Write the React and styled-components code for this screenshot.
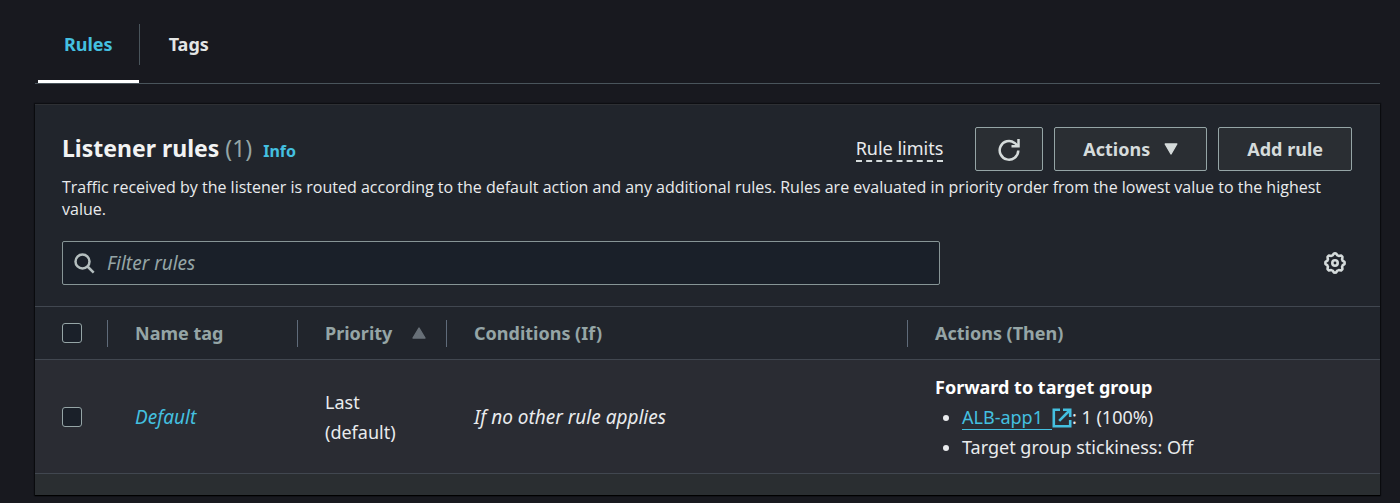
import { useState } from 'react'
import styled, { createGlobalStyle } from 'styled-components'

const GlobalStyle = createGlobalStyle`
  * {
    box-sizing: border-box;
  }

  body {
    margin: 0;
    background-color: #18191f;
    color: #e9ebed;
    font-family: "Noto Sans", "Open Sans", sans-serif;
    font-size: 18px;
    line-height: 30px;
  }

  button, input {
    font-family: inherit;
    font-size: inherit;
    color: inherit;
  }
`;

const Page = styled.main`
  padding: 7px 20px 8px 35px;
`;

const TabList = styled.div`
  display: flex;
  align-items: stretch;
  height: 77px;
  padding-left: 3px;

  border-bottom: 1px solid #49545b;
`;

const Tab = styled.button`
  padding: 0 26px;

  border: none;
  border-bottom: 3px solid ${props => props.$active ? "#fff" : "transparent"};
  background: none;
  color: ${props => props.$active ? "#44c0e0" : "#e3e5e5"};

  font-weight: 700;
  cursor: pointer;
`;

const TabDivider = styled.span`
  width: 1px;
  height: 41px;
  margin: 17px 3px 0 0;

  background-color: #49545b;
`;

const Panel = styled.section`
  margin-top: 20px;

  border-top: 1px solid #2e3034;
  background-color: #21252c;
  box-shadow: 0 1px 1px #000, 0 0 1px 1px #0d0e12;
`;

const PanelHeader = styled.header`
  padding: 22px 28px 21px 27px;
`;

const TitleRow = styled.div`
  display: flex;
  align-items: center;
  justify-content: space-between;
`;

const TitleBlock = styled.div`
  display: flex;
  align-items: baseline;
  gap: 11px;
`;

const Title = styled.h2`
  margin: 0;

  color: #f2f3f3;
  font-size: 23px;
  font-weight: 700;
`;

const Counter = styled.span`
  color: #95a5a6;
  font-weight: 400;
`;

const InfoLink = styled.a`
  color: #44c0e0;
  font-size: 16px;
  font-weight: 700;
  text-decoration: none;
`;

const ActionBar = styled.div`
  display: flex;
  align-items: center;
  gap: 11px;
`;

const LimitsButton = styled.button`
  margin-right: 21px;
  padding: 0;

  border: none;
  border-bottom: 2px dashed #d5dbdb;
  background: none;

  line-height: 24px;
  cursor: pointer;
`;

const Button = styled.button`
  display: flex;
  align-items: center;
  justify-content: center;
  gap: 14px;
  height: 44px;
  padding: 0 ${props => props.$iconOnly ? "22px" : "28px"};

  border: 1px solid #95a5a6;
  border-radius: 2px;
  background-color: #2a2e33;
  color: #d5dbdb;

  font-weight: 700;
  cursor: pointer;

  &:hover {
    background-color: #21252c;
  }
`;

const Description = styled.p`
  margin: 5px 0 21px;

  font-family: "Open Sans", "Noto Sans", sans-serif;
  font-size: 16px;
  line-height: 22px;
`;

const FilterRow = styled.div`
  display: flex;
  align-items: center;
  justify-content: space-between;
  padding-right: 6px;
`;

const SearchBox = styled.label`
  display: flex;
  align-items: center;
  gap: 12px;
  width: 100%;
  max-width: 878px;
  height: 44px;
  padding: 0 11px;

  border: 1px solid #879596;
  border-radius: 2px;
  background-color: #1a2029;
  color: #b4bebe;
`;

const SearchInput = styled.input`
  flex: 1;
  padding: 0;

  border: none;
  outline: none;
  background: none;

  font-size: 19px;

  &::placeholder {
    color: #95a5a6;
    font-style: italic;
    opacity: 1;
  }
`;

const IconButton = styled.button`
  display: flex;
  padding: 0;

  border: none;
  background: none;
  cursor: pointer;
`;

const Table = styled.table`
  width: 100%;

  border-collapse: collapse;
  table-layout: fixed;
`;

const Column = styled.col`
  width: ${props => props.$width || "auto"};
`;

const HeaderCell = styled.th`
  height: 53px;
  padding: 0;

  border-top: 1px solid #414750;
  border-bottom: 1px solid #414750;
  color: #95a5a6;

  font-weight: 700;
  text-align: left;
`;

const HeaderContent = styled.div`
  display: flex;
  align-items: center;
  gap: 20px;
  height: 27px;
  padding-left: 27px;

  border-right: ${props => props.$last ? "none" : "1px solid #5f6b7a"};
`;

const Cell = styled.td`
  padding: 12px 27px 11px;

  border-bottom: 1px solid #414750;
  background-color: #2a2c33;

  font-size: ${props => props.$italic ? "19px" : "18px"};
  font-style: ${props => props.$italic ? "italic" : "normal"};
`;

const Checkbox = styled.input`
  appearance: none;
  display: block;
  width: 20px;
  height: 20px;
  margin: 0;

  border: 1px solid #95a5a6;
  border-radius: 3px;
  background-color: #1a2029;

  &:checked {
    background-color: #44c0e0;
  }
`;

const RuleLink = styled.a`
  color: #44c0e0;
  text-decoration: none;
`;

const TargetLink = styled.a`
  display: inline-flex;
  align-items: center;

  color: #44c0e0;
  text-decoration: none;
`;

const TargetName = styled.span`
  padding-right: 9px;

  border-bottom: 1px solid #44c0e0;
  line-height: 24px;
`;

const ActionTitle = styled.strong`
  color: #fff;
  font-weight: 700;
`;

const ActionList = styled.ul`
  margin: 0;
  padding-left: 27px;
`;

const ActionItem = styled.li`
  height: 30px;
`;

const PanelFooter = styled.footer`
  height: 21px;

  background-color: #2a2e31;
`;

const RefreshIcon = () => (
  <svg width="22" height="23" viewBox="0 0 22 23" fill="none" stroke="currentColor" strokeWidth="2.5" aria-hidden="true">
    <path d="M20.3 12.5A9.3 9.3 0 1 1 16.6 4.9L19.8 7.6" />
    <path d="M20.5 1V8.2H13.5" />
  </svg>
)

const CaretDown = () => (
  <svg width="14" height="12" viewBox="0 0 14 12" fill="currentColor" stroke="currentColor" strokeWidth="1.4" strokeLinejoin="round" aria-hidden="true">
    <path d="M1.2 1H12.8L7 11Z" />
  </svg>
)

const CaretUp = () => (
  <svg width="14" height="12" viewBox="0 0 14 12" fill="#687078" stroke="#687078" strokeWidth="1.4" strokeLinejoin="round" aria-hidden="true">
    <path d="M1 11H13L7 1Z" />
  </svg>
)

const SearchIcon = () => (
  <svg width="21" height="21" viewBox="0 0 21 21" fill="none" stroke="currentColor" strokeWidth="2.5" aria-hidden="true">
    <circle cx="8.5" cy="8.5" r="7" />
    <path d="M13.5 13.5L19.7 19.7" />
  </svg>
)

// eight lobed cog, built from arcs around the centre
const GearIcon = () => {
  const points = Array.from({ length: 64 }, (_, i) => {
    const angle = i * Math.PI / 32
    const wave = Math.max(-0.8, Math.min(0.8, Math.cos(angle * 8) * 1.3))
    const r = 8.8 + wave
    return `${(11 + r * Math.cos(angle)).toFixed(2)},${(11 + r * Math.sin(angle)).toFixed(2)}`
  })

  return (
    <svg width="22" height="22" viewBox="0 0 22 22" fill="none" stroke="#d5dbdb" strokeWidth="2.6" strokeLinejoin="round" aria-hidden="true">
      <polygon points={points.join(" ")} />
      <circle cx="11" cy="11" r="2.7" />
    </svg>
  )
}

const ExternalIcon = () => (
  <svg width="20" height="20" viewBox="0 0 20 20" fill="none" stroke="currentColor" strokeWidth="2.6" aria-hidden="true">
    <path d="M8 1.8H1.8V18.2H18.2V12" />
    <path d="M11 1.8H18.2V9" />
    <path d="M17.5 2.5L7.2 12.8" />
  </svg>
)

const columns = [
  { text: "Name tag", width: "190px" },
  { text: "Priority", width: "149px", sorted: true },
  { text: "Conditions (If)", width: "461px" },
  { text: "Actions (Then)" },
];

const App = () => {
  const [tab, setTab] = useState("Rules")
  const [filter, setFilter] = useState("")
  const [selected, setSelected] = useState(false)

  const toggle = () => setSelected(!selected)

  return (
    <Page>
      <GlobalStyle />
      <TabList role="tablist">
        <Tab role="tab" aria-selected={tab === "Rules"} $active={tab === "Rules"} onClick={() => setTab("Rules")}>Rules</Tab>
        <TabDivider />
        <Tab role="tab" aria-selected={tab === "Tags"} $active={tab === "Tags"} onClick={() => setTab("Tags")}>Tags</Tab>
      </TabList>
      <Panel>
        <PanelHeader>
          <TitleRow>
            <TitleBlock>
              <Title>Listener rules <Counter>(1)</Counter></Title>
              <InfoLink href="#info">Info</InfoLink>
            </TitleBlock>
            <ActionBar>
              <LimitsButton>Rule limits</LimitsButton>
              <Button $iconOnly aria-label="Refresh"><RefreshIcon /></Button>
              <Button>Actions <CaretDown /></Button>
              <Button>Add rule</Button>
            </ActionBar>
          </TitleRow>
          <Description>
            Traffic received by the listener is routed according to the default action and any additional rules. Rules are evaluated in priority order from the lowest value to the highest value.
          </Description>
          <FilterRow>
            <SearchBox>
              <SearchIcon />
              <SearchInput
                aria-label="Filter rules"
                placeholder="Filter rules"
                value={filter}
                onChange={(e) => setFilter(e.target.value)}
              />
            </SearchBox>
            <IconButton aria-label="Preferences"><GearIcon /></IconButton>
          </FilterRow>
        </PanelHeader>
        <Table>
          <colgroup>
            <Column $width="73px" />
            {columns.map(column => <Column key={column.text} $width={column.width} />)}
          </colgroup>
          <thead>
            <tr>
              <HeaderCell>
                <HeaderContent>
                  <Checkbox type="checkbox" aria-label="Select all rules" checked={selected} onChange={toggle} />
                </HeaderContent>
              </HeaderCell>
              {
                columns.map((column, i) => <HeaderCell key={column.text}>
                  <HeaderContent $last={i === columns.length - 1}>
                    {column.text}
                    {column.sorted && <CaretUp />}
                  </HeaderContent>
                </HeaderCell>)
              }
            </tr>
          </thead>
          <tbody>
            <tr>
              <Cell>
                <Checkbox type="checkbox" aria-label="Select default rule" checked={selected} onChange={toggle} />
              </Cell>
              <Cell $italic><RuleLink href="#default">Default</RuleLink></Cell>
              <Cell>Last (default)</Cell>
              <Cell $italic>If no other rule applies</Cell>
              <Cell>
                <ActionTitle>Forward to target group</ActionTitle>
                <ActionList>
                  <ActionItem>
                    <TargetLink href="#target"><TargetName>ALB-app1</TargetName><ExternalIcon /></TargetLink>: 1 (100%)
                  </ActionItem>
                  <ActionItem>Target group stickiness: Off</ActionItem>
                </ActionList>
              </Cell>
            </tr>
          </tbody>
        </Table>
        <PanelFooter />
      </Panel>
    </Page>
  );
}

export default App
